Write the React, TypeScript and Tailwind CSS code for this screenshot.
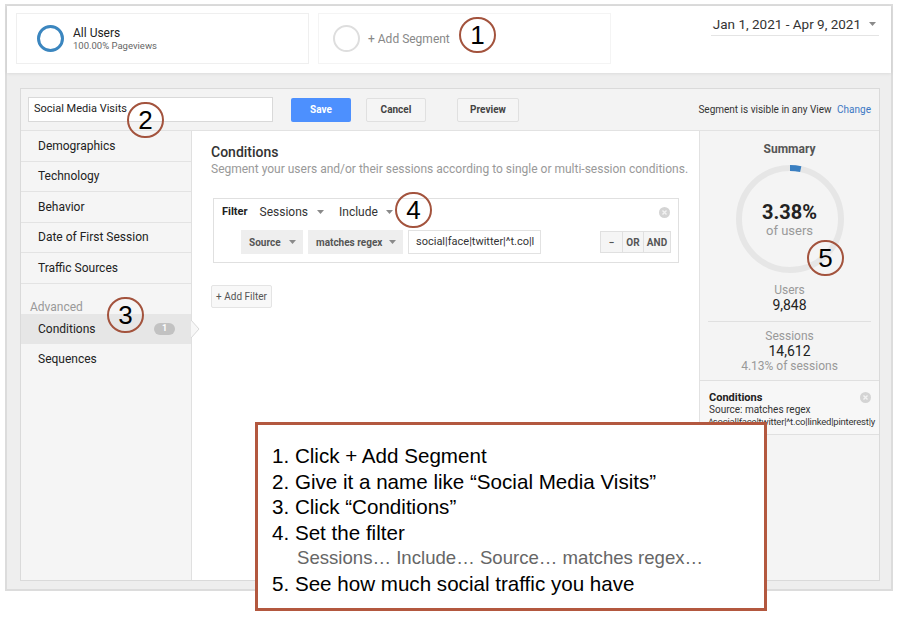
import React from "react"

const Caret = ({ className = "" }: { className?: string }) => (
  <svg width="7" height="4" viewBox="0 0 7 4" className={className}>
    <path d="M0 0 L7 0 L3.5 4 Z" fill="#8a8a8a" />
  </svg>
)

const CloseDot = () => (
  <svg width="11" height="11" viewBox="0 0 11 11">
    <circle cx="5.5" cy="5.5" r="5.5" fill="#d4d4d4" />
    <path d="M3.5 3.5 L7.5 7.5 M7.5 3.5 L3.5 7.5" stroke="#f2f2f2" strokeWidth="1.4" />
  </svg>
)

// red annotation circles drawn on top of the screenshot
function Marker({ n, x, y }: { n: number; x: number; y: number }) {
  return (
    <div
      className="absolute flex items-center justify-center w-[37px] h-[36px] rounded-full border-[2.5px] border-[#a3533d] text-[26px] leading-none text-black font-['Liberation_Sans',Arial,sans-serif]"
      style={{ left: x - 18, top: y - 18 }}
    >
      {n}
    </div>
  )
}

const navItems = ["Demographics", "Technology", "Behavior", "Date of First Session", "Traffic Sources"]

export default function App() {
  const C = 2 * Math.PI * 51

  return (
    <div className="relative w-[900px] h-[619px] bg-white overflow-hidden font-['Roboto',sans-serif]">
      <div className="ml-[5px] mt-[4px] w-[888px] border-2 border-[#dcdcdc] bg-[#eeeeee]">
        {/* segment cards + date */}
        <div className="flex items-start h-[67px] bg-white pl-[9px] pt-[7px] pr-[12px] shadow-[0_1px_3px_rgba(0,0,0,0.08)]">
          <div className="flex items-center w-[293px] h-[51px] border border-[#efefef] pl-[20px]">
            <div className="w-[27px] h-[27px] rounded-full border-[3.5px] border-[#3b86bf]" />
            <div className="ml-[9px] flex flex-col">
              <span className="text-[12px] leading-[14px] text-[#222]">All Users</span>
              <span className="text-[9.5px] leading-[12px] text-[#666]">100.00% Pageviews</span>
            </div>
          </div>
          <div className="ml-[9px] flex items-center w-[293px] h-[51px] border border-[#f4f4f4] pl-[14px]">
            <div className="w-[27px] h-[27px] rounded-full border-[2px] border-[#dedede]" />
            <span className="ml-[8px] text-[12px] text-[#888]">+ Add Segment</span>
          </div>
          <div className="ml-auto flex items-center gap-[8px] border-b border-[#e4e4e4] pl-[2px] pr-[3px] pb-[2px] pt-[2px]">
            <span className="text-[13.5px] leading-[18px] text-[#333]">Jan 1, 2021 - Apr 9, 2021</span>
            <Caret />
          </div>
        </div>

        {/* segment editor */}
        <div className="pl-[13px] pr-[11px] pt-[15px] pb-[8px]">
          <div className="w-[860px] h-[493px] border border-[#dadada] bg-white flex flex-col">
            <div className="flex items-center h-[42px] bg-[#f3f3f3] border-b border-[#e2e2e2] pl-[7px] pr-[8px]">
              <div className="flex items-center w-[245px] h-[25px] bg-white border border-[#d9d9d9] pl-[5px] text-[11px] text-[#222]">
                Social Media Visits
              </div>
              <div className="ml-[18px] flex items-center justify-center w-[60px] h-[24px] rounded-[2px] bg-[#4d90fe] text-[10px] font-bold text-white">
                Save
              </div>
              <div className="ml-[15px] flex items-center justify-center w-[60px] h-[24px] rounded-[2px] bg-[#f5f5f5] border border-[#e0e0e0] text-[10px] font-bold text-[#444]">
                Cancel
              </div>
              <div className="ml-[31px] flex items-center justify-center w-[62px] h-[24px] rounded-[2px] bg-[#f5f5f5] border border-[#e0e0e0] text-[10px] font-bold text-[#444]">
                Preview
              </div>
              <div className="ml-auto text-[10px] text-[#333]">
                Segment is visible in any View <span className="ml-[3px] text-[#3b78c4]">Change</span>
              </div>
            </div>

            <div className="flex flex-1 min-h-0">
              {/* left nav */}
              <div className="w-[171px] bg-[#f5f5f5] border-r border-[#e0e0e0] flex flex-col">
                {navItems.map((t) => (
                  <div key={t} className="flex items-center h-[30.5px] border-b border-[#e3e3e3] pl-[17px] text-[12px] text-[#222]">
                    {t}
                  </div>
                ))}
                <div className="pl-[9px] pt-[16px] text-[12px] leading-[14px] text-[#999]">Advanced</div>
                <div className="relative flex items-center h-[30px] bg-[#e6e6e6] pl-[17px] pr-[16px] text-[12px] text-[#222]">
                  Conditions
                  <span className="ml-auto flex items-center justify-center w-[21px] h-[12px] rounded-full bg-[#c2c2c2] text-[9px] font-bold text-white">1</span>
                  <svg width="9" height="18" viewBox="0 0 9 18" className="absolute right-[-9px] top-[6px]">
                    <path d="M0 0 L8 9 L0 18" fill="#f7f7f7" stroke="#d8d8d8" strokeWidth="1" />
                  </svg>
                </div>
                <div className="flex items-center h-[30px] pl-[17px] text-[12px] text-[#222]">Sequences</div>
              </div>

              {/* main */}
              <div className="flex-1 pl-[19px] pt-[12px]">
                <div className="text-[14px] leading-[18px] font-medium text-[#333]">Conditions</div>
                <div className="text-[12px] leading-[16px] text-[#999]">
                  Segment your users and/or their sessions according to single or multi-session conditions.
                </div>
                <div className="ml-[2px] mt-[21px] w-[466px] h-[65px] border border-[#e0e0e0] pt-[3px]">
                  <div className="flex items-center h-[20px] pl-[8px] pr-[8px]">
                    <span className="text-[11px] font-bold text-[#222]">Filter</span>
                    <span className="ml-[12px] text-[12px] text-[#333]">Sessions</span>
                    <Caret className="ml-[9px]" />
                    <span className="ml-[15px] text-[12px] text-[#333]">Include</span>
                    <Caret className="ml-[8px]" />
                    <span className="ml-auto">
                      <CloseDot />
                    </span>
                  </div>
                  <div className="flex items-center mt-[8px] pl-[27px] pr-[7px] h-[24px]">
                    <div className="flex items-center w-[62px] h-[24px] bg-[#eeeeee] pl-[8px] pr-[7px] text-[10px] font-bold text-[#555]">
                      Source
                      <Caret className="ml-auto" />
                    </div>
                    <div className="ml-[5px] flex items-center w-[95px] h-[24px] bg-[#eeeeee] pl-[8px] pr-[7px] text-[10px] font-bold text-[#555]">
                      matches regex
                      <Caret className="ml-auto" />
                    </div>
                    <div className="ml-[5px] flex items-center w-[133px] h-[24px] bg-white border border-[#e2e2e2] pl-[7px] text-[11px] text-[#333] overflow-hidden whitespace-nowrap">
                      social|face|twitter|^t.co|l
                    </div>
                    <div className="ml-auto flex h-[22px] border border-[#e0e0e0] bg-[#f5f5f5] text-[10px] font-bold text-[#555]">
                      <div className="flex items-center justify-center w-[22px] border-r border-[#e0e0e0]">−</div>
                      <div className="flex items-center justify-center w-[21px] border-r border-[#e0e0e0]">OR</div>
                      <div className="flex items-center justify-center w-[26px]">AND</div>
                    </div>
                  </div>
                </div>
                <div className="mt-[22px] flex items-center justify-center w-[61px] h-[23px] bg-[#f8f8f8] border border-[#e4e4e4] rounded-[2px] text-[10px] text-[#555]">
                  + Add Filter
                </div>
              </div>

              {/* summary */}
              <div className="w-[180px] bg-[#f4f4f4] border-l border-[#e2e2e2] flex flex-col">
                <div className="pt-[10px] text-center text-[12px] leading-[16px] font-bold text-[#555]">Summary</div>
                <div className="relative mx-auto mt-[7px] w-[110px] h-[110px]">
                  <svg width="110" height="110" viewBox="0 0 110 110">
                    <circle cx="55" cy="55" r="51" fill="none" stroke="#e6e6e6" strokeWidth="6" />
                    <circle
                      cx="55"
                      cy="55"
                      r="51"
                      fill="none"
                      stroke="#3a7fc1"
                      strokeWidth="6"
                      strokeDasharray={`${C * 0.0338} ${C}`}
                      transform="rotate(-90 55 55)"
                    />
                  </svg>
                  <div className="absolute inset-0 flex flex-col items-center justify-center pt-[2px]">
                    <span className="text-[20px] leading-[22px] font-bold text-[#222]">3.38%</span>
                    <span className="text-[13px] leading-[16px] text-[#999]">of users</span>
                  </div>
                </div>
                <div className="mt-[9px] text-center text-[12px] leading-[14px] text-[#999]">Users</div>
                <div className="text-center text-[14px] leading-[16px] text-[#222]">9,848</div>
                <div className="mx-[8px] mt-[8px] border-t border-[#e0e0e0]" />
                <div className="mt-[7px] text-center text-[12px] leading-[14px] text-[#999]">Sessions</div>
                <div className="text-center text-[14px] leading-[16px] text-[#222]">14,612</div>
                <div className="text-center text-[12px] leading-[14px] text-[#999]">4.13% of sessions</div>
                <div className="mt-[7px] border-t border-[#e0e0e0] bg-[#f7f7f7] pl-[9px] pr-[8px] pt-[10px] pb-[6px] border-b overflow-hidden">
                  <div className="flex items-center">
                    <span className="text-[11px] leading-[13px] font-bold text-[#222]">Conditions</span>
                    <span className="ml-auto">
                      <CloseDot />
                    </span>
                  </div>
                  <div className="text-[10px] leading-[12px] text-[#333] whitespace-nowrap">Source: matches regex</div>
                  <div className="text-[9.5px] leading-[12px] text-[#333] whitespace-nowrap tracking-[-0.2px]">
                    ^social|face|twitter|^t.co|linked|pinterest|y
                  </div>
                </div>
              </div>
            </div>
          </div>
        </div>
      </div>

      <Marker n={1} x={477} y={35} />
      <Marker n={2} x={145} y={120} />
      <Marker n={3} x={125} y={315} />
      <Marker n={4} x={413} y={210} />
      <Marker n={5} x={825} y={258} />

      {/* instructions callout */}
      <div className="absolute left-[255px] top-[422px] w-[512px] h-[189px] border-[3px] border-[#b3583f] bg-white pl-[14px] pt-[18px] font-['Liberation_Sans',Arial,sans-serif] text-[20.6px] leading-[25.6px] text-black">
        <div>1. Click + Add Segment</div>
        <div>2. Give it a name like “Social Media Visits”</div>
        <div>3. Click “Conditions”</div>
        <div>4. Set the filter</div>
        <div className="pl-[25px] text-[18.6px] text-[#666]">Sessions… Include… Source… matches regex…</div>
        <div>5. See how much social traffic you have</div>
      </div>
    </div>
  )
}
